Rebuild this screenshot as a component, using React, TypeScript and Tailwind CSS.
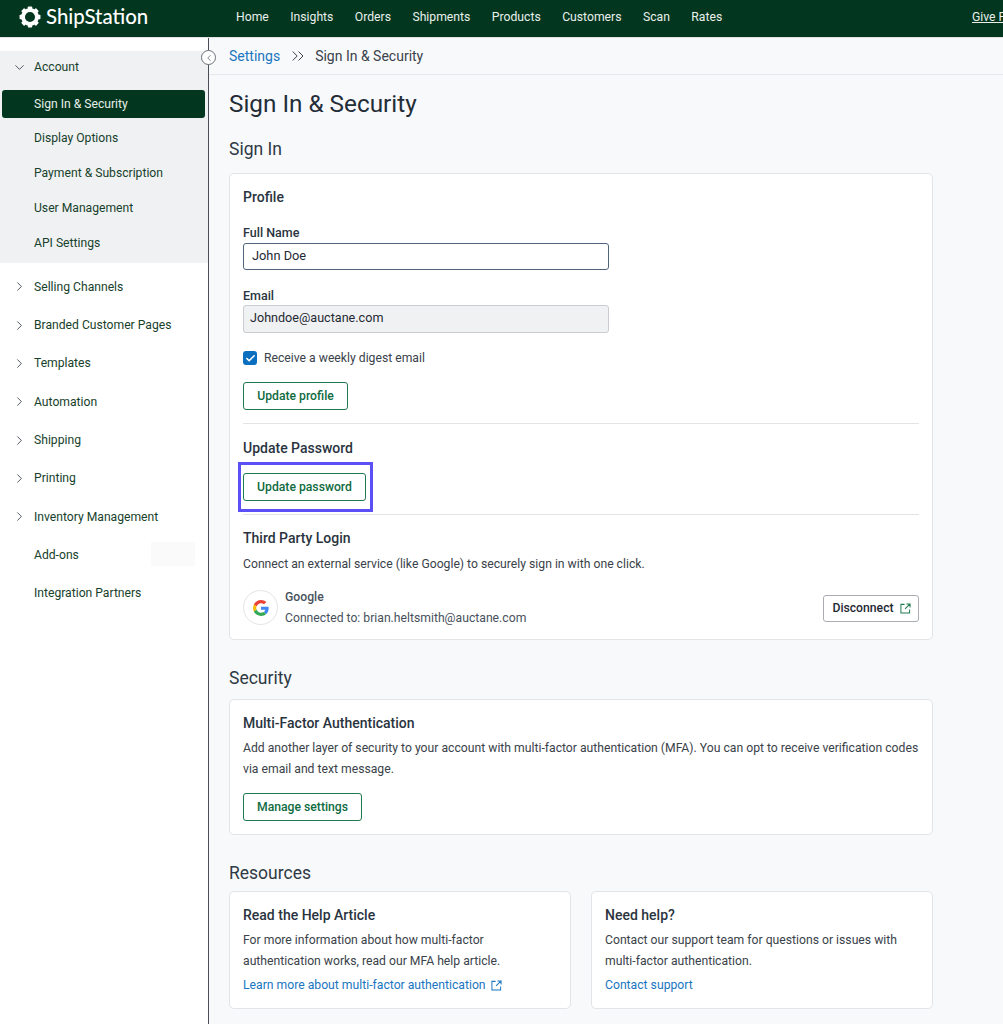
import React from "react";
import { ChevronDown, ChevronRight, ChevronLeft, ChevronsRight, Check } from "lucide-react";

const nav = ["Home", "Insights", "Orders", "Shipments", "Products", "Customers", "Scan", "Rates"];
const account = ["Display Options", "Payment & Subscription", "User Management", "API Settings"];
const channels: [string, boolean][] = [
  ["Selling Channels", true],
  ["Branded Customer Pages", true],
  ["Templates", true],
  ["Automation", true],
  ["Shipping", true],
  ["Printing", true],
  ["Inventory Management", true],
  ["Add-ons", false],
  ["Integration Partners", false],
];

function LinkOut({ className }: { className: string }) {
  return (
    <svg viewBox="0 0 12 12" fill="none" stroke="currentColor" strokeWidth="1.1" className={className}>
      <path d="M5 1.5H1v9.500h9.500V7M7 1h4v4M11 1 5.500 6.500" />
    </svg>
  );
}

function Gear() {
  const teeth = [0, 45, 90, 135, 180, 225, 270, 315];
  return (
    <svg viewBox="0 0 24 24" className="w-[22px] h-[22px] shrink-0" fill="#fff">
      <circle cx="12" cy="12" r="7.600" fill="none" stroke="#fff" strokeWidth="4.200" />
      {teeth.map((t) => (
        <rect key={t} x="9.600" y="0.600" width="4.800" height="4" rx="0.800" transform={`rotate(${t} 12 12)`} />
      ))}
    </svg>
  );
}

function GoogleG() {
  return (
    <svg viewBox="0 0 48 48" className="w-4 h-4">
      <path fill="#EA4335" d="M24 9.5c3.5 0 6.7 1.2 9.2 3.6l6.9-6.9C35.900 2.400 30.500 0 24 0 14.600 0 6.500 5.400 2.600 13.200l8 6.200C12.500 13.700 17.800 9.500 24 9.500z" />
      <path fill="#4285F4" d="M46.980 24.550c0-1.570-.150-3.090-.380-4.550H24v9.020h12.940c-.580 2.960-2.260 5.480-4.780 7.180l7.730 6c4.510-4.180 7.090-10.360 7.090-17.650z" />
      <path fill="#FBBC05" d="M10.530 28.590c-.480-1.450-.760-2.990-.760-4.590s.270-3.140.760-4.590l-7.980-6.190C.920 16.460 0 20.120 0 24c0 3.880.920 7.540 2.560 10.780l7.970-6.190z" />
      <path fill="#34A853" d="M24 48c6.480 0 11.930-2.130 15.890-5.810l-7.730-6c-2.150 1.450-4.920 2.300-8.160 2.300-6.260 0-11.570-4.220-13.470-9.910l-7.980 6.190C6.510 42.620 14.620 48 24 48z" />
    </svg>
  );
}

function GreenButton({ label, w }: { label: string; w: string }) {
  return (
    <button className={`h-7 ${w} rounded-[3px] border border-[#1f7a50] bg-white text-[12.200px] font-medium text-[#106b3f] flex items-center justify-center`}>
      {label}
    </button>
  );
}

export default function App() {
  return (
    <div className="h-[1024px] w-[1003px] overflow-hidden bg-[#f8f9fb] font-['Roboto',sans-serif] text-[#2a3440] flex flex-col">
      <header className="h-[37px] shrink-0 bg-[#03361f] flex items-center text-white overflow-hidden">
        <div className="w-[236px] shrink-0 pl-[19px] flex items-center gap-[5px] pb-[4px]">
          <Gear />
          <span className="font-['Lato',sans-serif] text-[20.400px] leading-none font-medium">ShipStation</span>
        </div>
        <nav className="flex gap-[21.450px] text-[12.200px] text-[#e9efeb] pb-[2px]">
          {nav.map((n) => (
            <span key={n}>{n}</span>
          ))}
        </nav>
        <span className="ml-auto w-[31px] shrink-0 whitespace-nowrap overflow-hidden text-[12.200px] text-[#e9efeb] underline pb-[2px]">Give Feedback</span>
      </header>

      <div className="flex flex-1 min-h-0 border-t border-[#dfe3e6]">
        <aside className="relative w-[209px] shrink-0 bg-white border-r-[1.500px] border-[#4a4f55] pt-[13px] text-[12.150px] text-[#17412c]">
          <div className="absolute -right-[8px] top-[12px] w-[15px] h-[15px] rounded-full bg-white border border-[#6a7076] flex items-center justify-center">
            <ChevronLeft className="w-2.5 h-2.5 text-[#6a7076]" />
          </div>
          <div className="bg-[#f0f1f3] h-[212px] pt-[2px]">
            <div className="h-[28px] flex items-center pl-[12px] gap-[7px]">
              <ChevronDown className="w-[15px] h-[15px] text-[#2a3440]" strokeWidth={1.300} />
              <span>Account</span>
            </div>
            <div className="mx-[2px] mt-[9px] h-[27.500px] rounded-[3px] w-[203px] bg-[#03361f] text-[#e6eee9] flex items-center pl-[32px]">Sign In &amp; Security</div>
            <div className="mt-[3.700px]">
              {account.map((a) => (
                <div key={a} className="h-[34.750px] flex items-center pl-[34px]">{a}</div>
              ))}
            </div>
          </div>
          <div className="mt-[4.500px]">
            {channels.map(([c, hasIcon]) => (
              <div key={c} className="relative h-[38.350px] flex items-center pl-[12px] gap-[7px]">
                {hasIcon ? <ChevronRight className="w-[15px] h-[15px] text-[#2a3440]" strokeWidth={1.300} /> : <span className="w-[15px]" />}
                <span>{c}</span>
                {c === "Add-ons" && <span className="absolute left-[151px] top-[6px] w-[44px] h-[24px] bg-[#fafafa]" />}
              </div>
            ))}
          </div>
        </aside>

        <main className="flex-1 min-w-0">
          <div className="h-[37px] bg-[#f8f9fb] border-b border-[#e6e8eb] pl-5 flex items-center text-[14px]">
            <span className="text-[#1a76c0]">Settings</span>
            <ChevronsRight className="w-5 h-5 ml-[8px] mr-[7px] text-[#3a424a]" strokeWidth={1.200} />
            <span className="text-[#3a424a]">Sign In &amp; Security</span>
          </div>

          <div className="pl-5 w-[724px]">
            <h1 className="text-[24.300px] leading-[32px] mt-[13px] text-[#232d38]">Sign In &amp; Security</h1>
            <h2 className="text-[17.500px] leading-[24px] mt-[17px] text-[#2f3944]">Sign In</h2>

            <section className="relative mt-[12px] h-[467px] bg-white border border-[#e2e4e8] rounded-[5px] px-[13px]">
              <h3 className="text-[14px] font-medium leading-[20px] mt-[13px]">Profile</h3>
              <div className="text-[12.500px] font-medium leading-[16px] mt-[18px]">Full Name</div>
              <div className="mt-[2px] w-[366px] h-[27px] rounded-[3px] border border-[#50657c] bg-white flex items-center pl-[8px] pb-[1px] text-[12.800px] text-[#1f2933]">John Doe</div>
              <div className="text-[12.500px] font-medium leading-[16px] mt-[18px]">Email</div>
              <div className="mt-[1px] w-[366px] h-[28px] rounded-[3px] border border-[#c9ccd0] bg-[#f0f1f3] flex items-center pl-[6px] pb-[1px] text-[12.600px] text-[#1f2933]">Johndoe@auctane.com</div>
              <div className="mt-[17px] flex items-center gap-[7px] h-[16px]">
                <span className="w-[14px] h-[14px] rounded-[3px] bg-[#0b6fc0] flex items-center justify-center">
                  <Check className="w-[11px] h-[11px] text-white" strokeWidth={3.500} />
                </span>
                <span className="text-[12.200px] text-[#3a424a]">Receive a weekly digest email</span>
              </div>
              <div className="mt-[16px]"><GreenButton label="Update profile" w="w-[105px]" /></div>
              <div className="mt-[13px] border-t border-[#e2e5e8]" />
              <h3 className="text-[14px] font-medium leading-[20px] mt-[14px]">Update Password</h3>
              <div className="mt-[15px]"><GreenButton label="Update password" w="w-[123px]" /></div>
              <div className="mt-[13px] border-t border-[#e2e5e8]" />
              <h3 className="text-[14px] font-medium leading-[20px] mt-[13px]">Third Party Login</h3>
              <p className="text-[12.200px] leading-[18px] mt-[7px] text-[#3a424a]">Connect an external service (like Google) to securely sign in with one click.</p>
              <div className="mt-[17px] flex items-start">
                <div className="w-[35px] h-[35px] rounded-full border border-[#e2e4e8] flex items-center justify-center shrink-0"><GoogleG /></div>
                <div className="ml-[7px] -mt-[3px] text-[12.200px] text-[#48515b] leading-[21px]">
                  <div className="font-medium">Google</div>
                  <div>Connected to: brian.heltsmith@auctane.com</div>
                </div>
                <button className="ml-auto mt-[5px] h-[27px] w-[96px] rounded-[3px] border border-[#a9adb2] bg-white text-[12.200px] font-medium text-[#1f2933] flex items-center justify-center gap-[6px] pl-[1px]">
                  Disconnect
                  <LinkOut className="w-[11px] h-[11px] text-[#1f7a50]" />
                </button>
              </div>
              <div className="absolute left-[8px] top-[288px] w-[135px] h-[50px] border-[3px] border-[#5b50f5] pointer-events-none" />
            </section>

            <h2 className="text-[17.500px] leading-[24px] mt-[26px] text-[#2f3944]">Security</h2>
            <section className="mt-[9px] h-[136px] bg-white border border-[#e2e4e8] rounded-[5px] px-[13px]">
              <h3 className="text-[14px] font-medium leading-[20px] mt-[13px]">Multi-Factor Authentication</h3>
              <p className="text-[12.200px] leading-[21px] mt-[5px] text-[#3a424a]">Add another layer of security to your account with multi-factor authentication (MFA). You can opt to receive verification codes via email and text message.</p>
              <div className="mt-[13px]"><GreenButton label="Manage settings" w="w-[119px]" /></div>
            </section>

            <h2 className="text-[17.500px] leading-[24px] mt-[26px] text-[#2f3944]">Resources</h2>
            <div className="mt-[6px] grid grid-cols-2 gap-5">
              <section className="h-[118px] bg-white border border-[#e2e4e8] rounded-[5px] px-[13px]">
                <h3 className="text-[14px] font-medium leading-[20px] mt-[13px]">Read the Help Article</h3>
                <p className="text-[12.200px] leading-[21px] mt-[5px] text-[#3a424a]">For more information about how multi-factor authentication works, read our MFA help article.</p>
                <div className="mt-[3px] flex items-center gap-[5px] text-[12.200px] leading-[21px] text-[#1a76c0]">
                  Learn more about multi-factor authentication
                  <LinkOut className="w-[11px] h-[11px]" />
                </div>
              </section>
              <section className="h-[118px] bg-white border border-[#e2e4e8] rounded-[5px] px-[13px]">
                <h3 className="text-[14px] font-medium leading-[20px] mt-[13px]">Need help?</h3>
                <p className="text-[12.200px] leading-[21px] mt-[5px] text-[#3a424a]">Contact our support team for questions or issues with multi-factor authentication.</p>
                <div className="mt-[3px] text-[12.200px] leading-[21px] text-[#1a76c0]">Contact support</div>
              </section>
            </div>
          </div>
        </main>
      </div>
    </div>
  );
}
